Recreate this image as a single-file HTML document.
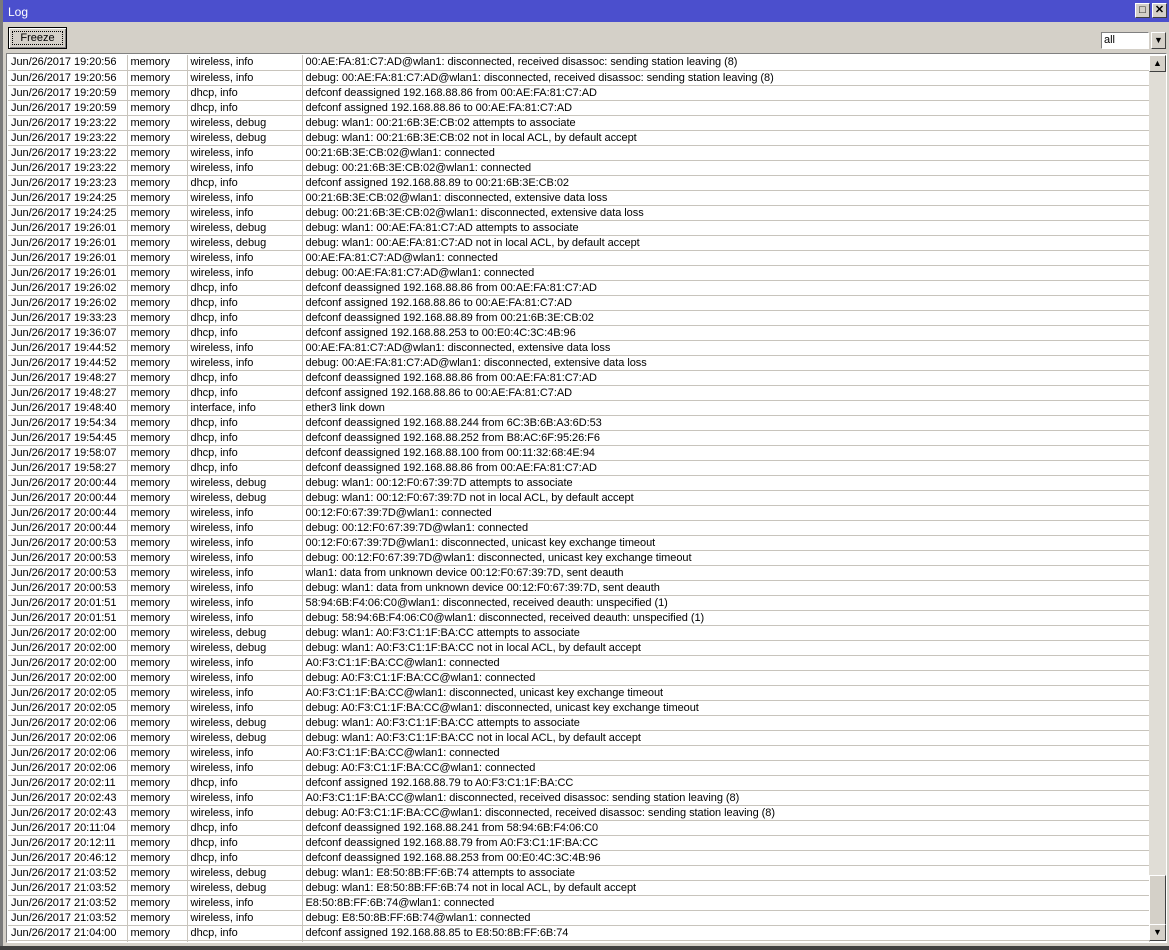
<!DOCTYPE html>
<html><head><meta charset="utf-8"><style>
*{margin:0;padding:0;box-sizing:border-box}
body{width:1169px;height:950px;background:#d4d0c8;font-family:"Liberation Sans",Tahoma,sans-serif;font-size:11px;position:relative;overflow:hidden}
#edgeL{position:absolute;left:0;top:0;width:3px;height:950px;background:#7a7a7a}
#edgeB{position:absolute;left:0;top:946px;width:1169px;height:4px;background:#404040}
#title{position:absolute;left:3px;top:0;width:1166px;height:22px;background:#4b4fcd;color:#fff;font-size:12px;line-height:24px;padding-left:5px}
.tb{position:absolute;top:3px;width:15px;height:15px;background:#d4d0c8;border:1px solid;border-color:#fff #404040 #404040 #fff;font-size:11px;line-height:13px;text-align:center;color:#000;font-weight:bold}
#freeze{position:absolute;left:8px;top:27px;width:59px;height:22px;border:1px solid #000;background:#d4d0c8;box-shadow:inset 1px 1px #fff,inset -1px -1px #808080;font-size:11px}
#freeze span{position:absolute;left:3px;top:3px;right:3px;bottom:3px;border:1px dotted #000;text-align:center;line-height:13px}
#sel{position:absolute;left:1101px;top:32px;width:48px;height:17px;background:#fff;border:1px solid;border-color:#808080 #fff #fff #808080;padding-left:2px;line-height:15px}
#selb{position:absolute;left:1151px;top:32px;width:15px;height:17px;border:1px solid;border-color:#fff #404040 #404040 #fff;font-size:9px;text-align:center;line-height:15px}
#tbl{position:absolute;left:6px;top:53px;width:1161px;height:890px;border:1px solid;border-color:#808080 #fff #fff #808080;background:#fff;overflow:hidden}
table{border-collapse:collapse;table-layout:fixed;position:absolute;left:1px;top:1px;width:1142px}
td{height:15px;border-right:1px solid #c8c4bc;border-bottom:1px solid #c8c4bc;padding-left:3px;white-space:nowrap;overflow:hidden;line-height:14px;color:#000;letter-spacing:-0.05px}
#sb{position:absolute;left:1142px;top:1px;width:17px;height:886px;background:#e0ddd6}
.sbb{position:absolute;left:0;width:17px;height:17px;background:#d4d0c8;border:1px solid;border-color:#fff #404040 #404040 #fff;font-size:9px;text-align:center;line-height:15px}
#thumb{position:absolute;left:0;top:820px;width:17px;height:50px;background:#d4d0c8;border:1px solid;border-color:#fff #404040 #404040 #fff}
</style></head><body>
<div id="edgeL"></div>
<div id="title">Log</div>
<div class="tb" style="left:1135px">□</div><div class="tb" style="left:1152px">✕</div>
<div id="freeze"><span>Freeze</span></div>
<div id="sel">all</div><div id="selb">▼</div>
<div id="tbl">
<table>
<colgroup><col style="width:119px"><col style="width:60px"><col style="width:115px"><col></colgroup>
<tr><td>Jun/26/2017 19:20:56</td><td>memory</td><td>wireless, info</td><td>00:AE:FA:81:C7:AD@wlan1: disconnected, received disassoc: sending station leaving (8)</td></tr>
<tr><td>Jun/26/2017 19:20:56</td><td>memory</td><td>wireless, info</td><td>debug: 00:AE:FA:81:C7:AD@wlan1: disconnected, received disassoc: sending station leaving (8)</td></tr>
<tr><td>Jun/26/2017 19:20:59</td><td>memory</td><td>dhcp, info</td><td>defconf deassigned 192.168.88.86 from 00:AE:FA:81:C7:AD</td></tr>
<tr><td>Jun/26/2017 19:20:59</td><td>memory</td><td>dhcp, info</td><td>defconf assigned 192.168.88.86 to 00:AE:FA:81:C7:AD</td></tr>
<tr><td>Jun/26/2017 19:23:22</td><td>memory</td><td>wireless, debug</td><td>debug: wlan1: 00:21:6B:3E:CB:02 attempts to associate</td></tr>
<tr><td>Jun/26/2017 19:23:22</td><td>memory</td><td>wireless, debug</td><td>debug: wlan1: 00:21:6B:3E:CB:02 not in local ACL, by default accept</td></tr>
<tr><td>Jun/26/2017 19:23:22</td><td>memory</td><td>wireless, info</td><td>00:21:6B:3E:CB:02@wlan1: connected</td></tr>
<tr><td>Jun/26/2017 19:23:22</td><td>memory</td><td>wireless, info</td><td>debug: 00:21:6B:3E:CB:02@wlan1: connected</td></tr>
<tr><td>Jun/26/2017 19:23:23</td><td>memory</td><td>dhcp, info</td><td>defconf assigned 192.168.88.89 to 00:21:6B:3E:CB:02</td></tr>
<tr><td>Jun/26/2017 19:24:25</td><td>memory</td><td>wireless, info</td><td>00:21:6B:3E:CB:02@wlan1: disconnected, extensive data loss</td></tr>
<tr><td>Jun/26/2017 19:24:25</td><td>memory</td><td>wireless, info</td><td>debug: 00:21:6B:3E:CB:02@wlan1: disconnected, extensive data loss</td></tr>
<tr><td>Jun/26/2017 19:26:01</td><td>memory</td><td>wireless, debug</td><td>debug: wlan1: 00:AE:FA:81:C7:AD attempts to associate</td></tr>
<tr><td>Jun/26/2017 19:26:01</td><td>memory</td><td>wireless, debug</td><td>debug: wlan1: 00:AE:FA:81:C7:AD not in local ACL, by default accept</td></tr>
<tr><td>Jun/26/2017 19:26:01</td><td>memory</td><td>wireless, info</td><td>00:AE:FA:81:C7:AD@wlan1: connected</td></tr>
<tr><td>Jun/26/2017 19:26:01</td><td>memory</td><td>wireless, info</td><td>debug: 00:AE:FA:81:C7:AD@wlan1: connected</td></tr>
<tr><td>Jun/26/2017 19:26:02</td><td>memory</td><td>dhcp, info</td><td>defconf deassigned 192.168.88.86 from 00:AE:FA:81:C7:AD</td></tr>
<tr><td>Jun/26/2017 19:26:02</td><td>memory</td><td>dhcp, info</td><td>defconf assigned 192.168.88.86 to 00:AE:FA:81:C7:AD</td></tr>
<tr><td>Jun/26/2017 19:33:23</td><td>memory</td><td>dhcp, info</td><td>defconf deassigned 192.168.88.89 from 00:21:6B:3E:CB:02</td></tr>
<tr><td>Jun/26/2017 19:36:07</td><td>memory</td><td>dhcp, info</td><td>defconf assigned 192.168.88.253 to 00:E0:4C:3C:4B:96</td></tr>
<tr><td>Jun/26/2017 19:44:52</td><td>memory</td><td>wireless, info</td><td>00:AE:FA:81:C7:AD@wlan1: disconnected, extensive data loss</td></tr>
<tr><td>Jun/26/2017 19:44:52</td><td>memory</td><td>wireless, info</td><td>debug: 00:AE:FA:81:C7:AD@wlan1: disconnected, extensive data loss</td></tr>
<tr><td>Jun/26/2017 19:48:27</td><td>memory</td><td>dhcp, info</td><td>defconf deassigned 192.168.88.86 from 00:AE:FA:81:C7:AD</td></tr>
<tr><td>Jun/26/2017 19:48:27</td><td>memory</td><td>dhcp, info</td><td>defconf assigned 192.168.88.86 to 00:AE:FA:81:C7:AD</td></tr>
<tr><td>Jun/26/2017 19:48:40</td><td>memory</td><td>interface, info</td><td>ether3 link down</td></tr>
<tr><td>Jun/26/2017 19:54:34</td><td>memory</td><td>dhcp, info</td><td>defconf deassigned 192.168.88.244 from 6C:3B:6B:A3:6D:53</td></tr>
<tr><td>Jun/26/2017 19:54:45</td><td>memory</td><td>dhcp, info</td><td>defconf deassigned 192.168.88.252 from B8:AC:6F:95:26:F6</td></tr>
<tr><td>Jun/26/2017 19:58:07</td><td>memory</td><td>dhcp, info</td><td>defconf deassigned 192.168.88.100 from 00:11:32:68:4E:94</td></tr>
<tr><td>Jun/26/2017 19:58:27</td><td>memory</td><td>dhcp, info</td><td>defconf deassigned 192.168.88.86 from 00:AE:FA:81:C7:AD</td></tr>
<tr><td>Jun/26/2017 20:00:44</td><td>memory</td><td>wireless, debug</td><td>debug: wlan1: 00:12:F0:67:39:7D attempts to associate</td></tr>
<tr><td>Jun/26/2017 20:00:44</td><td>memory</td><td>wireless, debug</td><td>debug: wlan1: 00:12:F0:67:39:7D not in local ACL, by default accept</td></tr>
<tr><td>Jun/26/2017 20:00:44</td><td>memory</td><td>wireless, info</td><td>00:12:F0:67:39:7D@wlan1: connected</td></tr>
<tr><td>Jun/26/2017 20:00:44</td><td>memory</td><td>wireless, info</td><td>debug: 00:12:F0:67:39:7D@wlan1: connected</td></tr>
<tr><td>Jun/26/2017 20:00:53</td><td>memory</td><td>wireless, info</td><td>00:12:F0:67:39:7D@wlan1: disconnected, unicast key exchange timeout</td></tr>
<tr><td>Jun/26/2017 20:00:53</td><td>memory</td><td>wireless, info</td><td>debug: 00:12:F0:67:39:7D@wlan1: disconnected, unicast key exchange timeout</td></tr>
<tr><td>Jun/26/2017 20:00:53</td><td>memory</td><td>wireless, info</td><td>wlan1: data from unknown device 00:12:F0:67:39:7D, sent deauth</td></tr>
<tr><td>Jun/26/2017 20:00:53</td><td>memory</td><td>wireless, info</td><td>debug: wlan1: data from unknown device 00:12:F0:67:39:7D, sent deauth</td></tr>
<tr><td>Jun/26/2017 20:01:51</td><td>memory</td><td>wireless, info</td><td>58:94:6B:F4:06:C0@wlan1: disconnected, received deauth: unspecified (1)</td></tr>
<tr><td>Jun/26/2017 20:01:51</td><td>memory</td><td>wireless, info</td><td>debug: 58:94:6B:F4:06:C0@wlan1: disconnected, received deauth: unspecified (1)</td></tr>
<tr><td>Jun/26/2017 20:02:00</td><td>memory</td><td>wireless, debug</td><td>debug: wlan1: A0:F3:C1:1F:BA:CC attempts to associate</td></tr>
<tr><td>Jun/26/2017 20:02:00</td><td>memory</td><td>wireless, debug</td><td>debug: wlan1: A0:F3:C1:1F:BA:CC not in local ACL, by default accept</td></tr>
<tr><td>Jun/26/2017 20:02:00</td><td>memory</td><td>wireless, info</td><td>A0:F3:C1:1F:BA:CC@wlan1: connected</td></tr>
<tr><td>Jun/26/2017 20:02:00</td><td>memory</td><td>wireless, info</td><td>debug: A0:F3:C1:1F:BA:CC@wlan1: connected</td></tr>
<tr><td>Jun/26/2017 20:02:05</td><td>memory</td><td>wireless, info</td><td>A0:F3:C1:1F:BA:CC@wlan1: disconnected, unicast key exchange timeout</td></tr>
<tr><td>Jun/26/2017 20:02:05</td><td>memory</td><td>wireless, info</td><td>debug: A0:F3:C1:1F:BA:CC@wlan1: disconnected, unicast key exchange timeout</td></tr>
<tr><td>Jun/26/2017 20:02:06</td><td>memory</td><td>wireless, debug</td><td>debug: wlan1: A0:F3:C1:1F:BA:CC attempts to associate</td></tr>
<tr><td>Jun/26/2017 20:02:06</td><td>memory</td><td>wireless, debug</td><td>debug: wlan1: A0:F3:C1:1F:BA:CC not in local ACL, by default accept</td></tr>
<tr><td>Jun/26/2017 20:02:06</td><td>memory</td><td>wireless, info</td><td>A0:F3:C1:1F:BA:CC@wlan1: connected</td></tr>
<tr><td>Jun/26/2017 20:02:06</td><td>memory</td><td>wireless, info</td><td>debug: A0:F3:C1:1F:BA:CC@wlan1: connected</td></tr>
<tr><td>Jun/26/2017 20:02:11</td><td>memory</td><td>dhcp, info</td><td>defconf assigned 192.168.88.79 to A0:F3:C1:1F:BA:CC</td></tr>
<tr><td>Jun/26/2017 20:02:43</td><td>memory</td><td>wireless, info</td><td>A0:F3:C1:1F:BA:CC@wlan1: disconnected, received disassoc: sending station leaving (8)</td></tr>
<tr><td>Jun/26/2017 20:02:43</td><td>memory</td><td>wireless, info</td><td>debug: A0:F3:C1:1F:BA:CC@wlan1: disconnected, received disassoc: sending station leaving (8)</td></tr>
<tr><td>Jun/26/2017 20:11:04</td><td>memory</td><td>dhcp, info</td><td>defconf deassigned 192.168.88.241 from 58:94:6B:F4:06:C0</td></tr>
<tr><td>Jun/26/2017 20:12:11</td><td>memory</td><td>dhcp, info</td><td>defconf deassigned 192.168.88.79 from A0:F3:C1:1F:BA:CC</td></tr>
<tr><td>Jun/26/2017 20:46:12</td><td>memory</td><td>dhcp, info</td><td>defconf deassigned 192.168.88.253 from 00:E0:4C:3C:4B:96</td></tr>
<tr><td>Jun/26/2017 21:03:52</td><td>memory</td><td>wireless, debug</td><td>debug: wlan1: E8:50:8B:FF:6B:74 attempts to associate</td></tr>
<tr><td>Jun/26/2017 21:03:52</td><td>memory</td><td>wireless, debug</td><td>debug: wlan1: E8:50:8B:FF:6B:74 not in local ACL, by default accept</td></tr>
<tr><td>Jun/26/2017 21:03:52</td><td>memory</td><td>wireless, info</td><td>E8:50:8B:FF:6B:74@wlan1: connected</td></tr>
<tr><td>Jun/26/2017 21:03:52</td><td>memory</td><td>wireless, info</td><td>debug: E8:50:8B:FF:6B:74@wlan1: connected</td></tr>
<tr><td>Jun/26/2017 21:04:00</td><td>memory</td><td>dhcp, info</td><td>defconf assigned 192.168.88.85 to E8:50:8B:FF:6B:74</td></tr>
<tr><td>Jun/26/2017 21:15:00</td><td>memory</td><td>wireless, info</td><td>E8:50:8B:FF:6B:74@wlan1: disconnected, extensive data loss</td></tr>
</table>
<div id="sb">
<div class="sbb" style="top:0">▲</div>
<div id="thumb"></div>
<div class="sbb" style="top:869px">▼</div>
</div>
</div>
<div id="edgeB"></div>
</body></html>
